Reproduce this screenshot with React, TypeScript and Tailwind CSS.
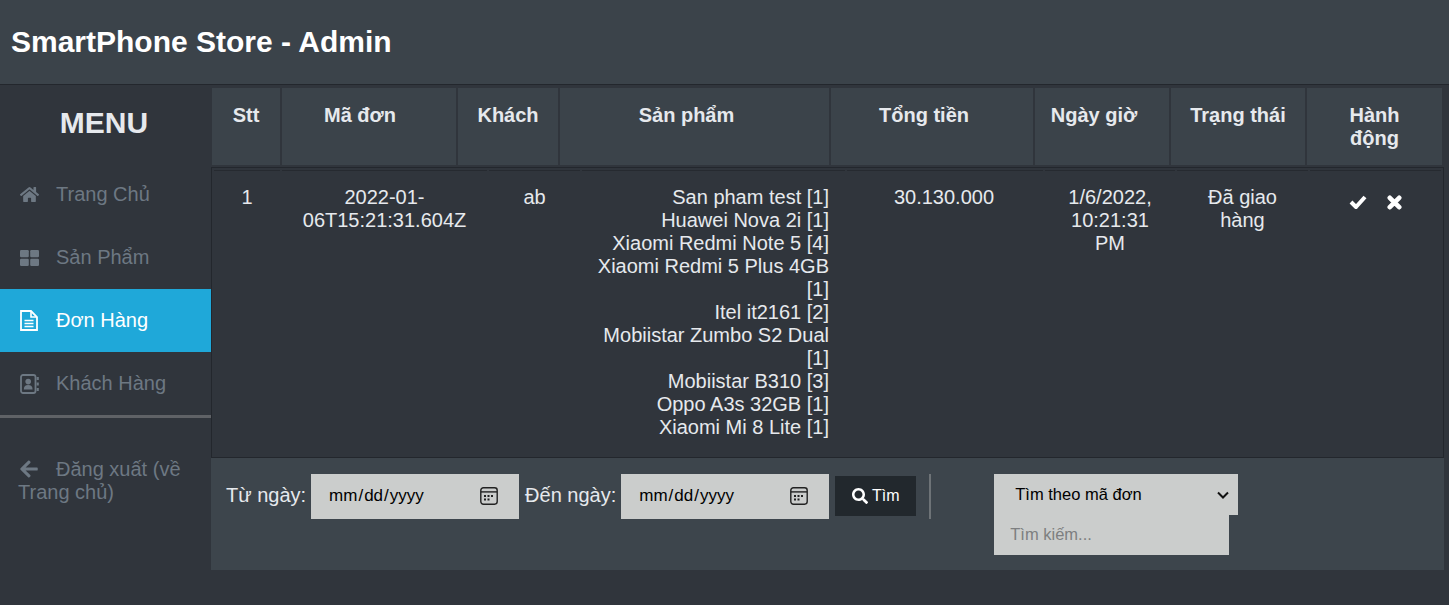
import { FaArrowLeft, FaHome, FaSearch } from "react-icons/fa";

const GridIcon = ({ className }: { className?: string }) => (
	<svg viewBox="0 0 19 16" className={className} fill="currentColor">
		<rect x="0" y="0" width="8.8" height="7.2" rx="1.2" />
		<rect x="10.2" y="0" width="8.8" height="7.2" rx="1.2" />
		<rect x="0" y="8.8" width="8.8" height="7.2" rx="1.2" />
		<rect x="10.2" y="8.8" width="8.8" height="7.2" rx="1.2" />
	</svg>
);

const FileIcon = ({ className }: { className?: string }) => (
	<svg viewBox="0 0 18 21" className={className} fill="none" stroke="currentColor">
		<path d="M1 1h10l6 6v13H1z" strokeWidth="1.8" />
		<path d="M11 1v6h6" strokeWidth="1.6" />
		<path d="M4.5 10.5h9M4.5 13.5h9M4.5 16.5h9" strokeWidth="1.5" />
	</svg>
);

const BookIcon = ({ className }: { className?: string }) => (
	<svg viewBox="0 0 19 20" className={className} fill="currentColor">
		<rect x="1" y="1" width="14.5" height="18" rx="2" fill="none" stroke="currentColor" strokeWidth="1.8" />
		<circle cx="8.2" cy="7.6" r="2.8" />
		<path d="M3.8 15.5c0-3.2 1.6-4.6 4.4-4.6s4.4 1.4 4.4 4.6z" />
		<rect x="16.6" y="3" width="2.2" height="3" />
		<rect x="16.6" y="8.5" width="2.2" height="3" />
		<rect x="16.6" y="14" width="2.2" height="3" />
	</svg>
);

const CheckIcon = ({ className }: { className?: string }) => (
	<svg viewBox="0 0 18 18" className={className} fill="none" stroke="currentColor" strokeWidth="4" strokeLinejoin="round">
		<path d="M2 9l5 5L16 4" />
	</svg>
);

const CrossIcon = ({ className }: { className?: string }) => (
	<svg viewBox="0 0 16 16" className={className} fill="none" stroke="currentColor" strokeWidth="5" strokeLinecap="round">
		<path d="M3 3l10 10M13 3L3 13" />
	</svg>
);

const CalendarIcon = () => (
	<svg viewBox="0 0 18 18" className="absolute right-[21px] top-[13px] w-[18px] h-[18px] pointer-events-none text-[#222]" fill="currentColor">
		<rect x="0.8" y="0.8" width="16.4" height="16.4" rx="2.6" fill="none" stroke="currentColor" strokeWidth="1.4" />
		<rect x="1" y="4.2" width="16" height="1.4" />
		<rect x="4" y="8" width="2" height="2" />
		<rect x="7.5" y="8" width="2" height="2" />
		<rect x="11" y="8" width="2" height="2" />
		<rect x="4" y="11.5" width="2" height="2" />
		<rect x="7.5" y="11.5" width="2" height="2" />
	</svg>
);

const menuItems = [
	{ label: "Trang Chủ", icon: <FaHome className="w-[19px] h-[19px]" /> },
	{ label: "Sản Phẩm", icon: <GridIcon className="w-[19px] h-[16px]" /> },
	{ label: "Đơn Hàng", icon: <FileIcon className="w-[18px] h-[21px]" />, active: true },
	{ label: "Khách Hàng", icon: <BookIcon className="w-[19px] h-[20px]" /> },
];

const columns = [
	{ label: "Stt", className: "w-[68px] px-[8px]" },
	{ label: "Mã đơn", className: "w-[174px] pl-[8px] pr-[26px]" },
	{ label: "Khách", className: "w-[100px] px-[8px]" },
	{ label: "Sản phẩm", className: "w-[269px] pl-[8px] pr-[24px]" },
	{ label: "Tổng tiền", className: "w-[202px] pl-[8px] pr-[24px]" },
	{ label: "Ngày giờ", className: "w-[134px] pl-[8px] pr-[24px]" },
	{ label: "Trạng thái", className: "w-[134px] px-[8px]" },
	{ label: "Hành động", className: "w-[135px] px-[16px]" },
];

const products = [
	"San pham test [1]",
	"Huawei Nova 2i [1]",
	"Xiaomi Redmi Note 5 [4]",
	"Xiaomi Redmi 5 Plus 4GB [1]",
	"Itel it2161 [2]",
	"Mobiistar Zumbo S2 Dual [1]",
	"Mobiistar B310 [3]",
	"Oppo A3s 32GB [1]",
	"Xiaomi Mi 8 Lite [1]",
];

const tdClass = "pr-[16px] pt-[15px] pb-[16px] border-t border-[#262a30] align-top";
const fieldClass = "bg-[#cbcdcc] text-black outline-none";

const App = () => {
	return (
		<div className="min-h-screen bg-[#30353c] text-[20px] leading-[23px] text-[#e6e9ed] font-['Liberation_Sans',Arial,sans-serif]">
			<header className="h-[85px] flex items-center pl-[11px] bg-[#3b434a] border-b border-[#23272d]">
				<h1 className="text-[30px] leading-[34px] font-bold text-white">SmartPhone Store - Admin</h1>
			</header>

			<div className="flex items-start">
				<aside className="w-[211px] shrink-0">
					<div className="h-[78px] pt-[21px] pr-[3px] text-center text-[30px] leading-[34px] font-bold">MENU</div>
					{menuItems.map((item) => (
						<a
							key={item.label}
							className={`h-[63px] flex items-center pl-[20px] ${
								item.active ? "bg-[#1fa8d9] text-white" : "text-[#6d7883]"
							}`}
						>
							<span className="w-[36px] flex items-center">{item.icon}</span>
							{item.label}
						</a>
					))}
					<div className="h-[3px] bg-[#5f6266]" />
					<a className="block px-[18px] pt-[40px] text-[#6d7883]">
						<FaArrowLeft className="inline w-[20px] h-[20px] ml-[1px] mr-[17px] align-[-3px]" />
						Đăng xuất (về Trang chủ)
					</a>
				</aside>

				<main className="w-[1233px] shrink-0 pt-[3px]">
					<table className="w-[1234px] -ml-[1px] table-fixed border-separate border-spacing-x-[2px] border-spacing-y-0">
						<thead>
							<tr>
								{columns.map((col) => (
									<th
										key={col.label}
										className={`${col.className} h-[77px] pt-[16px] align-top font-bold bg-[#3b434a]`}
									>
										{col.label}
									</th>
								))}
							</tr>
						</thead>
					</table>

					<table className="w-[1233px] mt-[2px] table-fixed border-separate border-spacing-[2px] border border-[#23272d]">
						<tbody>
							<tr>
								<td className={`${tdClass} pl-[16px] w-[66px] text-center`}>1</td>
								<td className={`${tdClass} pl-[16px] w-[205px] text-center`}>2022-01-06T15:21:31.604Z</td>
								<td className={`${tdClass} pl-[16px] w-[91px] text-center`}>ab</td>
								<td className={`${tdClass} pl-[12px] w-[263px] text-right`}>
									{products.map((name) => (
										<div key={name}>{name}</div>
									))}
								</td>
								<td className={`${tdClass} pl-[14px] w-[196px] text-center`}>30.130.000</td>
								<td className={`${tdClass} pl-[16px] w-[130px] text-center`}>1/6/2022, 10:21:31 PM</td>
								<td className={`${tdClass} pl-[16px] w-[131px] text-center`}>Đã giao hàng</td>
								<td className={`${tdClass} pl-[16px] w-[131px]`}>
									<div className="flex items-center justify-center gap-[20px] pt-[7px] text-white">
										<CheckIcon className="w-[18px] h-[18px]" />
										<CrossIcon className="w-[15px] h-[15px]" />
									</div>
								</td>
							</tr>
						</tbody>
					</table>

					<div className="h-[112px] flex items-start pt-[16px] pl-[15px] bg-[#3d454c]">
						<label className="h-[45px] flex items-center pb-[2px] mr-[5px]">Từ ngày:</label>
						<div className="relative">
							<input
								type="date"
								className={`${fieldClass} w-[208px] h-[45px] pl-[17px] pb-[2px] text-[17px] [&::-webkit-calendar-picker-indicator]:opacity-0`}
							/>
							<CalendarIcon />
						</div>
						<label className="h-[45px] flex items-center pb-[2px] ml-[6px] mr-[5px]">Đến ngày:</label>
						<div className="relative">
							<input
								type="date"
								className={`${fieldClass} w-[208px] h-[45px] pl-[17px] pb-[2px] text-[17px] [&::-webkit-calendar-picker-indicator]:opacity-0`}
							/>
							<CalendarIcon />
						</div>
						<button className="w-[81px] h-[40px] mt-[2px] ml-[6px] pb-[1px] flex items-center justify-center gap-[4px] text-[16px] text-white bg-[#22282d]">
							<FaSearch className="w-[16px] h-[16px]" />
							Tìm
						</button>
						<div className="w-[2px] h-[45px] ml-[13px] mr-[63px] bg-[#6e7377]" />
						<div className="flex flex-col items-start">
							<div className="relative">
								<select className={`${fieldClass} block w-[244px] h-[41px] pl-[21px] text-[16.5px] appearance-none`}>
									<option>Tìm theo mã đơn</option>
								</select>
								<svg
									viewBox="0 0 12 8"
									className="absolute right-[9px] top-[17px] w-[12px] h-[8px] pointer-events-none"
									fill="none"
									stroke="#111"
									strokeWidth="2"
								>
									<path d="M1 1.5l5 5 5-5" />
								</svg>
							</div>
							<input
								placeholder="Tìm kiếm..."
								className={`${fieldClass} w-[235px] h-[40px] pl-[16px] pb-[2px] text-[16.5px] placeholder:text-[#7d7f80]`}
							/>
						</div>
					</div>
				</main>
			</div>
		</div>
	);
};

export default App;
